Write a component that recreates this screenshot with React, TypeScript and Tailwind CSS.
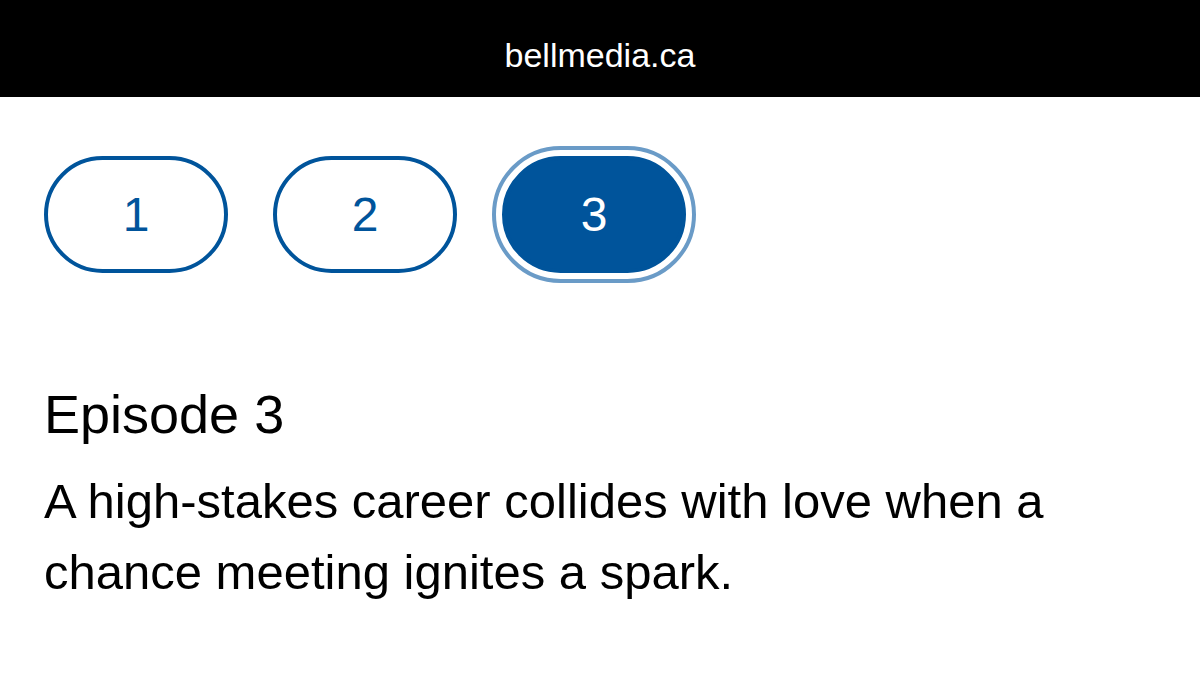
import { useState } from "react";

const EPISODES = [
  { id: 1, title: "Episode 1", blurb: "" },
  { id: 2, title: "Episode 2", blurb: "" },
  {
    id: 3,
    title: "Episode 3",
    blurb:
      "A high-stakes career collides with love when a chance meeting ignites a spark.",
  },
];

export default function App() {
  const [active, setActive] = useState(3);
  const episode = EPISODES.find((e) => e.id === active) ?? EPISODES[2];

  return (
    <div className="min-h-screen bg-white font-['Liberation_Sans',Arial,sans-serif] text-black">
      <header className="flex h-[97px] justify-center bg-black pt-[35px]">
        <span className="text-[34px] leading-[40px] text-white">bellmedia.ca</span>
      </header>

      <main className="px-[44px]">
        <div className="mt-[59px] flex gap-[45px]">
          {EPISODES.map((e) => {
            const selected = e.id === active;
            return (
              <button
                key={e.id}
                type="button"
                onClick={() => setActive(e.id)}
                className={
                  selected
                    ? "flex h-[117px] w-[184px] items-center justify-center rounded-full border-4 border-[#00549b] bg-[#00549b] text-[48px] leading-none text-white outline-4 outline-offset-[6px] outline-[#6a9bc7]"
                    : "flex h-[117px] w-[184px] items-center justify-center rounded-full border-4 border-[#00549b] bg-white text-[48px] leading-none text-[#00549b]"
                }
              >
                {e.id}
              </button>
            );
          })}
        </div>

        <h2 className="mt-[109px] text-[54px] leading-[64px] font-normal">{episode.title}</h2>
        <p className="mt-[20px] max-w-[1040px] text-[49px] leading-[71px]">{episode.blurb}</p>
      </main>
    </div>
  );
}
